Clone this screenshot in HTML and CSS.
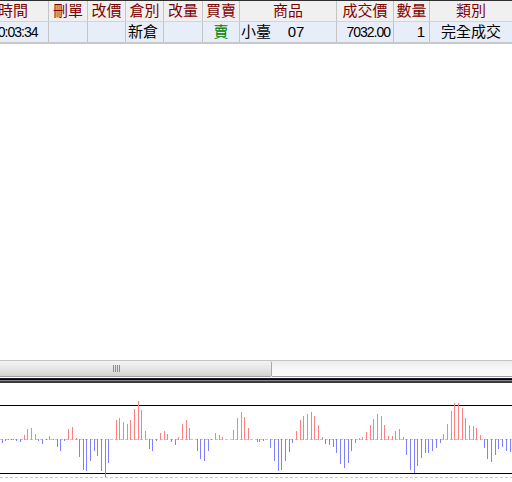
FILE: index.html
```html
<!DOCTYPE html>
<html>
<head>
<meta charset="utf-8">
<link rel="stylesheet" href="styles.css">
</head>
<body>
<div class="page">
  <div class="table">
    <div class="row head">
      <div class="c">時間</div>
      <div class="c">刪單</div>
      <div class="c">改價</div>
      <div class="c">倉別</div>
      <div class="c">改量</div>
      <div class="c">買賣</div>
      <div class="c">商品</div>
      <div class="c">成交價</div>
      <div class="c">數量</div>
      <div class="c">類別</div>
    </div>
    <div class="row data">
      <div class="c left time num">10:03:34</div>
      <div class="c"></div>
      <div class="c"></div>
      <div class="c left">新倉</div>
      <div class="c"></div>
      <div class="c center sell">賣</div>
      <div class="c left prod">小臺&nbsp;&nbsp;&nbsp;&nbsp;07</div>
      <div class="c right num">7032.00</div>
      <div class="c right qty">1</div>
      <div class="c center">完全成交</div>
    </div>
  </div>
  <div class="blank"></div>
  <div class="scrollbar">
    <div class="thumb"><div class="grip"><i></i><i></i><i></i><i></i></div></div>
    <div class="track"></div>
  </div>
  <div class="divider">
    <div class="d1"></div><div class="d2"></div><div class="d3"></div><div class="d4"></div>
  </div>
  <div class="chart">
    <svg width="512" height="99" viewBox="0 -36 1536 297" shape-rendering="crispEdges">
      <path d="M0 133.5H1536 M0 247.5H1536" stroke="#c8c8c8" stroke-width="3" stroke-dasharray="9 6" fill="none"/>
      <path d="M0 31.5H1536 M0 235.5H1536" stroke="#000" stroke-width="3" fill="none"/>
      <path stroke="#ff8080" stroke-width="3" fill="none" d="M72 120V135 M82 101V135 M94 98V135 M106 117V135 M148 123V135 M205 101V135 M217 95V135 M228 130V135 M348 75V135 M358 68V135 M370 80V135 M381 87V135 M392 74V135 M403 41V135 M414 17V135 M425 44V135 M436 107V135 M481 113V135 M492 107V135 M502 117V135 M536 125V135 M547 86V135 M559 74V135 M569 98V135 M647 113V135 M658 119V135 M668 125V135 M700 104V135 M712 68V135 M724 50V135 M734 65V135 M746 98V135 M889 107V135 M901 74V135 M911 62V135 M923 56V135 M934 50V135 M944 62V135 M955 89V135 M967 125V135 M1078 130V135 M1088 125V135 M1099 110V135 M1111 89V135 M1121 71V135 M1132 56V135 M1143 62V135 M1154 89V135 M1165 122V135 M1176 122V135 M1187 107V135 M1198 101V135 M1209 125V135 M1331 116V135 M1342 86V135 M1354 47V135 M1364 23V135 M1375 23V135 M1387 38V135 M1397 68V135 M1409 89V135 M1420 92V135 M1430 98V135 M1442 119V135"/>
      <path stroke="#8080ff" stroke-width="3" fill="none" d="M8 132V143 M16 132V139 M25 132V135 M33 132V134 M40 132V134 M50 132V137 M61 132V140 M115 132V137 M127 132V146 M139 132V134 M160 132V134 M172 132V155 M181 132V167 M193 132V137 M238 132V185 M250 132V225 M259 132V227 M271 132V197 M283 132V167 M292 132V182 M304 132V227 M316 132V245 M325 132V203 M448 132V161 M457 132V167 M469 132V137 M514 132V140 M526 132V150 M593 132V167 M602 132V191 M613 132V197 M626 132V167 M634 132V134 M771 132V140 M778 132V140 M790 132V137 M811 132V158 M823 132V197 M835 132V227 M844 132V224 M856 132V197 M868 132V170 M878 132V143 M976 132V146 M988 132V149 M1000 132V155 M1009 132V173 M1021 132V206 M1033 132V218 M1045 132V203 M1055 132V167 M1065 132V143 M1220 132V179 M1231 132V224 M1243 132V233 M1253 132V212 M1264 132V188 M1276 132V173 M1286 132V173 M1298 132V167 M1309 132V158 M1321 132V143 M1453 132V158 M1463 132V191 M1474 132V200 M1486 132V179 M1496 132V161 M1508 132V155 M1519 132V167 M1530 132V170"/>
    </svg>
  </div>
</div>
</body>
</html>
```

FILE: styles.css
```css
html, body {
  margin: 0;
  padding: 0;
  background: #fff;
}
body {
  width: 512px;
  height: 482px;
  overflow: hidden;
  font-family: "Liberation Sans", "Noto Sans CJK TC", sans-serif;
  font-size: 15px;
}
.page {
  display: flex;
  flex-direction: column;
  height: 482px;
  overflow: hidden;
}
.table {
  border-top: 1px solid #303030;
  overflow: hidden;
}
.row {
  display: grid;
  grid-template-columns: 70px 39px 38px 38px 39px 37px 97px 57px 36px 83px;
  margin-left: -22px;
  width: 534px;
}
.c {
  border-left: 1px solid #c4c4c4;
  height: 20px;
  line-height: 20px;
  white-space: nowrap;
  overflow: hidden;
  box-sizing: border-box;
}
.c:first-child {
  border-left: none;
}
.head {
  background: #f0f0f0;
  border-bottom: 1px solid #d4d4d4;
}
.head .c {
  color: #800000;
  text-align: center;
}
.data {
  background: #e8eef9;
  border-bottom: 2px solid #c8c8c8;
}
.data .c {
  color: #000;
}
.num {
  font-size: 14px;
  letter-spacing: -1px;
}
.left { text-align: left; padding-left: 2px; }
.time { padding-left: 13px; }
.prod { padding-left: 1px; }
.right { text-align: right; padding-right: 3px; }
.qty { padding-right: 4px; }
.center { text-align: center; }
.sell { color: #008000 !important; }
.blank {
  flex: 1;
}
.scrollbar {
  display: flex;
  height: 16px;
  border-top: 1px solid #c4c4c4;
  border-bottom: 1px solid #fff;
  flex: none;
}
.thumb {
  width: 271px;
  height: 15px;
  background: linear-gradient(#f4f4f4, #e6e6e6 50%, #d2d2d2);
  border-right: 1px solid #a8a8a8;
  border-bottom: 1px solid #a0a0a0;
  border-radius: 0 2px 2px 0;
  display: flex;
  align-items: center;
}
.grip {
  margin-left: 113px;
  display: flex;
  gap: 1px;
  height: 7px;
}
.grip i {
  width: 1px;
  height: 7px;
  background: #8c8c8c;
}
.track {
  flex: 1;
  height: 15px;
  background: linear-gradient(#ececec, #f8f8f8 60%, #fafafa);
  border-bottom: 1px solid #a0a0a0;
}
.divider {
  flex: none;
}
.d1 { height: 1px; background: #1c2030; }
.d2 { height: 1px; background: #000; }
.d3 { height: 1px; background: #8a8a8a; }
.d4 { height: 2px; background: #3c3c3c; }
.chart {
  flex: none;
  height: 99px;
}
.chart svg {
  display: block;
}
```
